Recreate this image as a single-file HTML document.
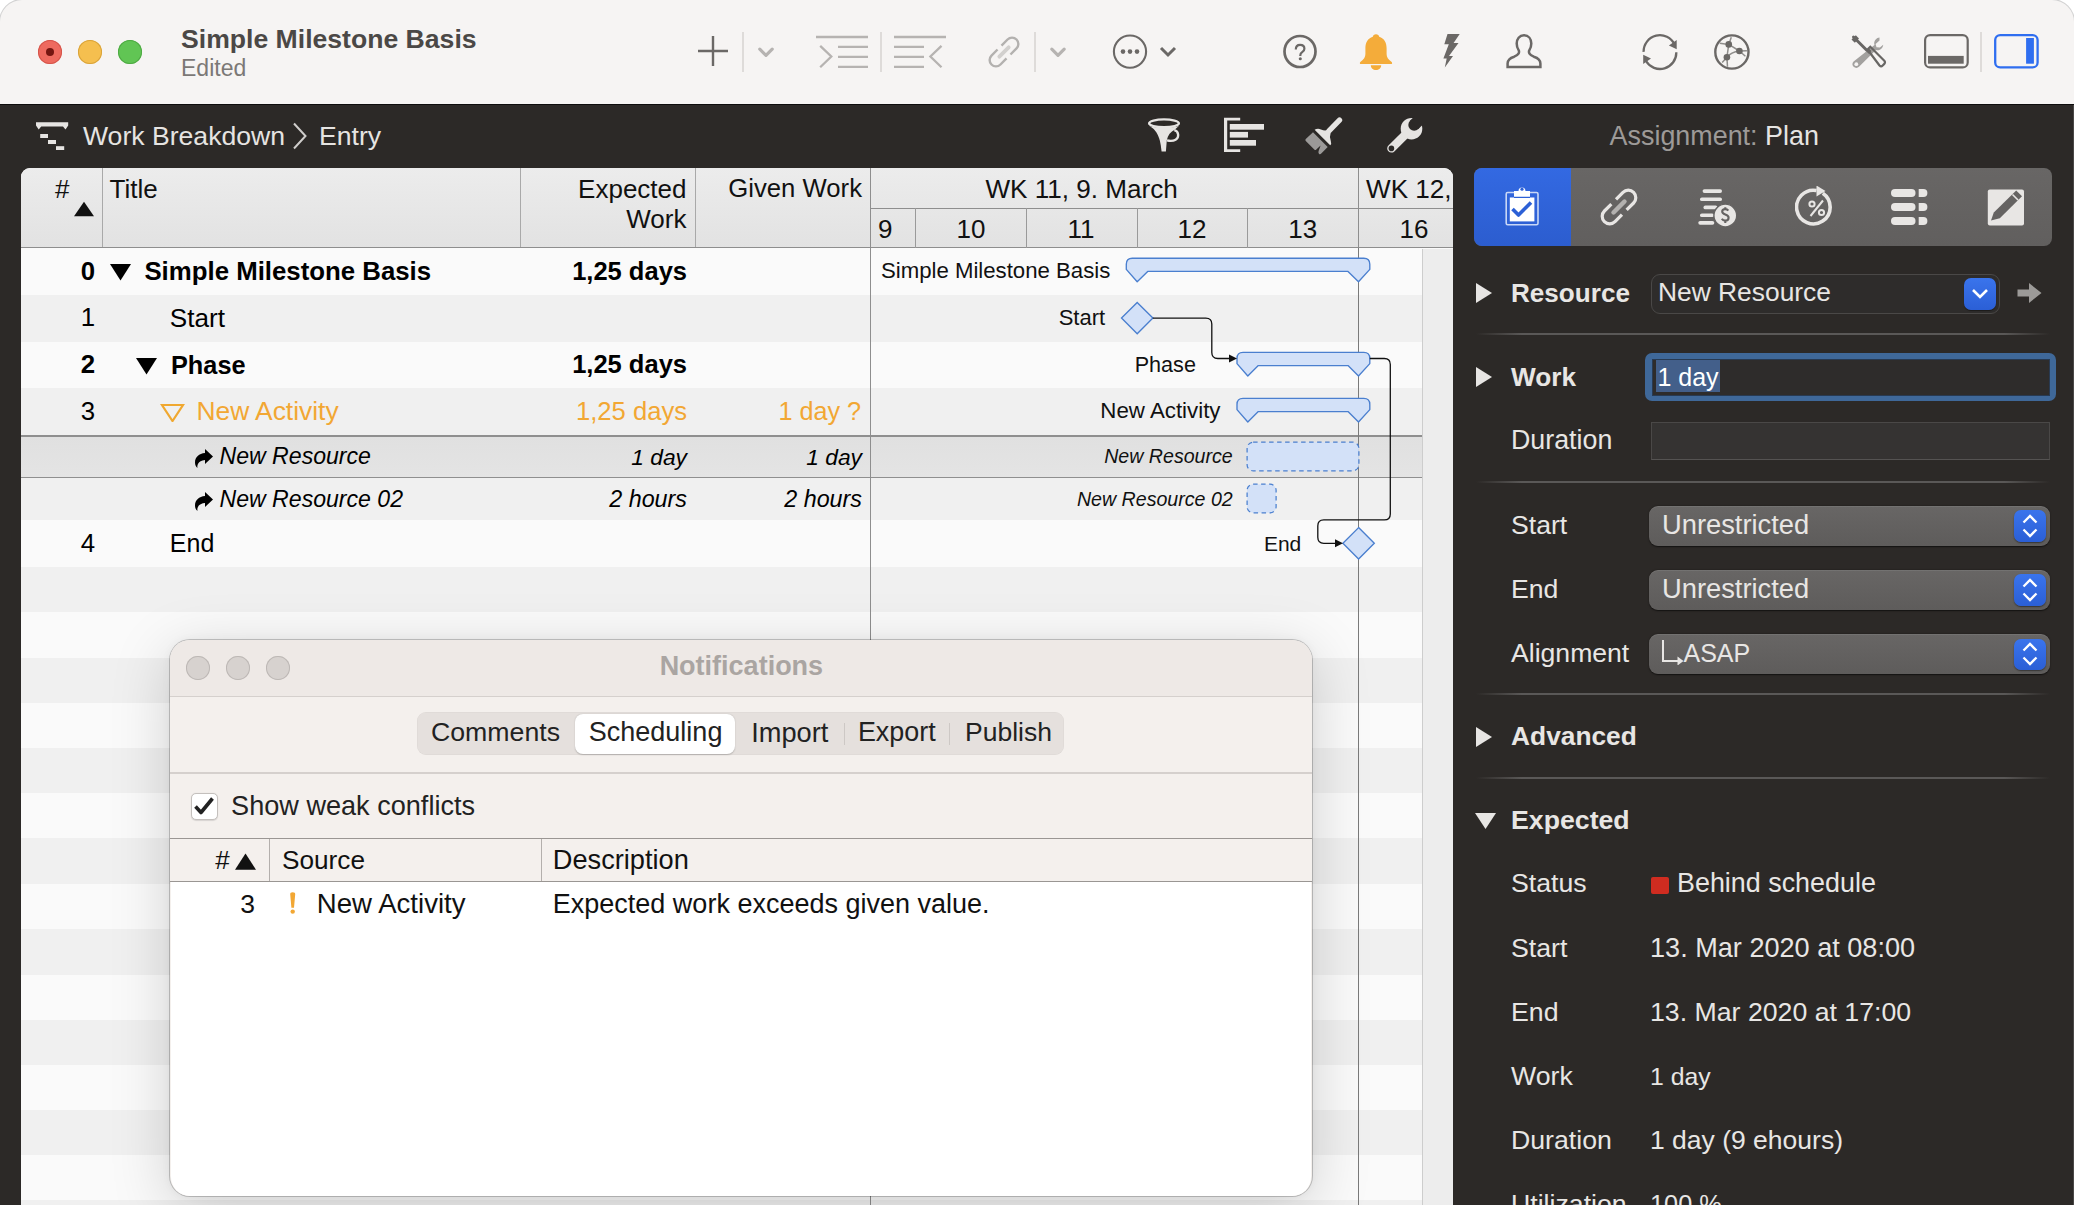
<!DOCTYPE html>
<html><head><meta charset="utf-8"><title>Merlin Project</title>
<style>
*{box-sizing:border-box;margin:0;padding:0}
html,body{width:2074px;height:1205px;overflow:hidden}
body{position:relative;background:#2c2927;font-family:"Liberation Sans",sans-serif}
.t{position:absolute;white-space:nowrap}
.r{position:absolute;display:block}
</style></head><body>
<div class="r" style="left:0;top:0;width:2074px;height:104px;background:#f6f4f3;border-radius:22px 22px 0 0;box-shadow:0 0 0 1px rgba(0,0,0,.18)"></div>
<div class="r" style="left:0px;top:104px;width:2074px;height:1.2px;background:#0e0d0d"></div>
<div class="r" style="left:2072.6px;top:105px;width:1.4px;height:1100px;background:#4a4847"></div>
<div class="r" style="left:38px;top:40px;width:24px;height:24px;border-radius:50%;background:#ee6a5f;box-shadow:inset 0 0 0 1px #d5544a"></div>
<div class="r" style="left:78px;top:40px;width:24px;height:24px;border-radius:50%;background:#f5bf4f;box-shadow:inset 0 0 0 1px #d9a33a"></div>
<div class="r" style="left:118px;top:40px;width:24px;height:24px;border-radius:50%;background:#61c554;box-shadow:inset 0 0 0 1px #4ea943"></div>
<div class="r" style="left:46px;top:48px;width:8px;height:8px;border-radius:50%;background:#741510"></div>
<div class="t" style="top:25.88px;font-size:26.6px;line-height:26.6px;color:#4b4846;font-weight:bold;left:181px;">Simple Milestone Basis</div>
<div class="t" style="top:56.53px;font-size:23px;line-height:23px;color:#7b7876;left:181px;">Edited</div>
<svg class="r" style="left:698px;top:36px;" width="30" height="30" viewBox="0 0 30 30"><path d="M15 0V30M0 15H30" stroke="#6b6866" stroke-width="2.4"/></svg>
<div class="r" style="left:742.25px;top:32px;width:1.5px;height:39.5px;background:#dedbd9"></div>
<div class="r" style="left:880.25px;top:32px;width:1.5px;height:39.5px;background:#dedbd9"></div>
<div class="r" style="left:1034.25px;top:32px;width:1.5px;height:39.5px;background:#dedbd9"></div>
<svg class="r" style="left:757px;top:46px;" width="18" height="13" viewBox="0 0 18 13"><path d="M2.8 3.2L9 9.4L15.2 3.2" fill="none" stroke="#b6b3b1" stroke-width="3.2" stroke-linecap="round" stroke-linejoin="round"/></svg>
<svg class="r" style="left:1049px;top:46px;" width="18" height="13" viewBox="0 0 18 13"><path d="M2.8 3.2L9 9.4L15.2 3.2" fill="none" stroke="#b6b3b1" stroke-width="3.2" stroke-linecap="round" stroke-linejoin="round"/></svg>
<svg class="r" style="left:814px;top:35px;" width="56" height="34" viewBox="0 0 56 34"><g fill="none" stroke="#b6b3b1" stroke-width="2.3"><path d="M2 2H54M24 11.9H54M24 21.9H54M24 31.9H54"/><path d="M6.2 10.8L17.3 21.5L6.2 32.3"/></g></svg>
<svg class="r" style="left:892px;top:35px;" width="56" height="34" viewBox="0 0 56 34"><g fill="none" stroke="#b6b3b1" stroke-width="2.3"><path d="M2 2H54M2 11.9H32M2 21.9H32M2 31.9H32"/><path d="M49.5 10.8L38.4 21.5L49.5 32.3"/></g></svg>
<svg class="r" style="left:988.4px;top:35.8px;" width="32" height="32" viewBox="0 0 32 32"><g transform="rotate(45 16 16)" fill="none" stroke="#b3b1af" stroke-width="2.4"><path d="M9.65 13.2V4.65A6.35 6.35 0 0 1 22.35 4.65V13.2"/><path d="M9.65 18.8V27.35A6.35 6.35 0 0 0 22.35 27.35V18.8"/><path d="M16 9.4V22.6" stroke="#d2d0ce" stroke-width="3.8" stroke-linecap="round"/></g></svg>
<svg class="r" style="left:1112px;top:34px;" width="36" height="36" viewBox="0 0 36 36"><circle cx="18" cy="17.6" r="16.1" fill="none" stroke="#6b6866" stroke-width="2.1"/><circle cx="11" cy="17.6" r="2.3" fill="#6b6866"/><circle cx="18" cy="17.6" r="2.3" fill="#6b6866"/><circle cx="25" cy="17.6" r="2.3" fill="#6b6866"/></svg>
<svg class="r" style="left:1159px;top:45px;" width="18" height="14" viewBox="0 0 18 14"><path d="M2 3L9 10L16 3" fill="none" stroke="#6b6866" stroke-width="3"/></svg>
<svg class="r" style="left:1282px;top:33px;" width="36" height="37" viewBox="0 0 36 37"><circle cx="18" cy="18.5" r="15.5" fill="none" stroke="#6b6866" stroke-width="2.7"/><path d="M13.8 16.4C13.8 13.4 15.6 11.8 18.1 11.8C20.7 11.8 22.4 13.5 22.4 15.7C22.4 17.4 21.5 18.3 20.2 19.2C18.9 20.1 18.3 20.8 18.3 22.4V23" fill="none" stroke="#6b6866" stroke-width="2.2"/><circle cx="18.3" cy="25.8" r="1.55" fill="#6b6866"/></svg>
<svg class="r" style="left:1358px;top:33px;" width="36" height="38" viewBox="0 0 36 38"><path fill="#f4ac3a" d="M18 1.2c1.8 0 3 1.1 3.2 2.6c5 1.6 7.4 5.6 7.4 11.5v5.8c0 3.5 1.6 5.4 4.8 7.6c1.2.9 1 2.4-.5 2.4H3.1c-1.5 0-1.7-1.5-.5-2.4c3.2-2.2 4.8-4.1 4.8-7.6v-5.8c0-5.9 2.4-9.9 7.4-11.5C15 2.3 16.2 1.2 18 1.2zM12.8 32.2h10.4c0 2.8-2.3 4.8-5.2 4.8s-5.2-2-5.2-4.8z"/></svg>
<svg class="r" style="left:1443px;top:33px;" width="19" height="36" viewBox="0 0 19 36"><path fill="#6b6866" d="M4.5 1H16.7L10.6 10H15.5L6 23H10L1.8 34.5L3.7 25.5H0.4L5.8 11.3H1.3Z"/></svg>
<svg class="r" style="left:1505px;top:33px;" width="38" height="37" viewBox="0 0 38 37"><path fill="none" stroke="#6b6866" stroke-width="2.5" d="M19 2.3c-4.6 0-7.3 3.6-7.3 8.3c0 3 .9 5 1.9 6.6c.6 1 .5 2.4-.1 3.5c-.8 1.4-2.2 2.1-4.3 3C5 25 2.6 26.5 2.6 30.5V34H35.4V30.5c0-4-2.4-5.5-6.6-6.8c-2.1-.9-3.5-1.6-4.3-3c-.6-1.1-.7-2.5-.1-3.5c1-1.6 1.9-3.6 1.9-6.6c0-4.7-2.7-8.3-7.3-8.3z"/></svg>
<svg class="r" style="left:1640px;top:33px;" width="40" height="38" viewBox="0 0 40 38"><g fill="none" stroke="#6b6866" stroke-width="2.3"><path d="M3.6 18.9A16.3 16.3 0 0 1 34.6 11.5"/><path d="M36.3 19.2A16.3 16.3 0 0 1 6 28"/></g><path fill="#6b6866" d="M36.7 7V16.2L28.9 12.4Z M3.2 21.8V30.9L11 25.5Z"/></svg>
<svg class="r" style="left:1714px;top:33px;" width="37" height="38" viewBox="0 0 37 38"><g fill="none" stroke="#8f8d8b" stroke-width="1.5"><path d="M14.75 11.4L25.4 18M14.75 11.4L12.9 24.3M12.9 24.3Q17 19 25.4 18M14.75 11.4L17.3 4.2M14.75 11.4L5.7 10.2M25.4 18L32.9 17.7M25.4 18L31.4 23.3M12.9 24.3L8.2 29.6M12.9 24.3L13.5 33.7"/></g><circle cx="17.9" cy="19" r="16.6" fill="none" stroke="#6b6866" stroke-width="2.4"/><g fill="#6b6866"><circle cx="14.75" cy="11.4" r="3.3"/><circle cx="25.4" cy="18" r="3.3"/><circle cx="12.9" cy="24.3" r="3.3"/></g></svg>
<svg class="r" style="left:1850px;top:34px;" width="38" height="37" viewBox="0 0 38 37"><path fill="#a3a19f" d="M29.5 3.5c-3 .3-5.3 2.8-5.3 5.8c0 .6.1 1.1.3 1.6L3.6 27.5c-1.6 1.5-1.6 3.8 0 5.3s3.9 1.5 5.4 0L25.9 16c.6.2 1.2.3 1.8.3c3-.2 5.4-2.6 5.5-5.6l-3.3 2.9l-3.4-.4l-.9-3.2l3.9-3.6z"/><circle cx="6.3" cy="30.2" r="1.9" fill="#f6f4f3"/><path d="M3.5 3L16.5 16" stroke="#686664" stroke-width="3" stroke-linecap="round"/><path d="M1.5 5.5L5.8 1.2L9 4.5L4.8 8.8Z" fill="#686664"/><path d="M17.5 15.5l2.8-2.8l14 14c.9.9.9 2.3 0 3.2l-1.6 1.6c-.9.9-2.3.9-3.2 0z" fill="none" stroke="#686664" stroke-width="2.2"/><path d="M16.2 17.2L19 14.4L21.5 16.9L18.7 19.7Z" fill="#686664"/></svg>
<svg class="r" style="left:1922px;top:32px;" width="48" height="38" viewBox="0 0 48 38"><rect x="3.1" y="3.1" width="42.6" height="32.3" rx="5" fill="none" stroke="#6b6866" stroke-width="2.2"/><rect x="6" y="23.9" width="35.7" height="7.8" fill="#6b6866"/></svg>
<div class="r" style="left:1980.3px;top:32px;width:1.4px;height:39.6px;background:#dedbd9"></div>
<svg class="r" style="left:1993px;top:32px;" width="48" height="38" viewBox="0 0 48 38"><rect x="2.2" y="3.1" width="42.4" height="32.3" rx="5" fill="none" stroke="#2f6ef0" stroke-width="2.3"/><rect x="33.1" y="6" width="7.8" height="25.7" fill="#2f6ef0"/></svg>
<div class="r" style="left:0;top:0;width:2074px;height:30px;background:#fff;z-index:-1"></div>
<svg class="r" style="left:35px;top:121px;" width="35" height="31" viewBox="0 0 35 31"><g fill="#e6e4e2"><path d="M1 1.2H33.2V4.5L30.5 8.5L28 5.5H6.2L3.7 8.5L1 4.5Z"/><rect x="5.2" y="13" width="7.8" height="4"/><rect x="13" y="19" width="8" height="4"/><rect x="21" y="25.2" width="8.2" height="3.8"/></g></svg>
<div class="t" style="top:123.28px;font-size:26.6px;line-height:26.6px;color:#e6e4e2;left:83px;">Work Breakdown</div>
<svg class="r" style="left:291px;top:121px;" width="18" height="30" viewBox="0 0 18 30"><path d="M3 2.5L14.5 15L3 27.5" fill="none" stroke="#cfcdcb" stroke-width="2"/></svg>
<div class="t" style="top:123.28px;font-size:26.6px;line-height:26.6px;color:#e6e4e2;left:319px;">Entry</div>
<svg class="r" style="left:1146px;top:116px;" width="38" height="40" viewBox="0 0 38 40"><ellipse cx="18" cy="7.3" rx="14.9" ry="3.9" fill="none" stroke="#e6e4e2" stroke-width="2.3"/><path fill="#e6e4e2" d="M3.2 9.8C9 13.5 14.2 18 15.6 35.6H19.9L20.8 24.2C21.8 19.5 24.5 15.8 29 13.6L33 9.8C27 12.5 9 12.5 3.2 9.8Z"/><path d="M28.3 14.2C32.8 15.2 33.6 21.5 29.6 23.7C27.4 25 24.2 25.2 21 24.4" fill="none" stroke="#e6e4e2" stroke-width="2.3"/></svg>
<svg class="r" style="left:1222px;top:116px;" width="44" height="38" viewBox="0 0 44 38"><g fill="#e6e4e2"><path d="M2 1.7H18.2V4.5H5.2V33.2H18.2V36H2Z"/><rect x="7.8" y="8" width="34.2" height="5.7"/><rect x="7.8" y="15.9" width="18.2" height="5.7"/><rect x="7.8" y="24" width="26.2" height="5.7"/></g></svg>
<svg class="r" style="left:1303px;top:116px;" width="42" height="42" viewBox="0 0 42 42"><path d="M36.5 4.2L26 14.8" stroke="#e6e4e2" stroke-width="5.4" stroke-linecap="round"/><path fill="#e6e4e2" d="M11.6 13.8Q14.5 12 18 13.4Q21.5 15 24.3 14L27.6 17.3Q26.2 20.8 27.8 25Q28.8 28 27.2 29.3Z"/><path fill="#9b9998" d="M10 16.2L24.7 31L18 37.8Q17 38.8 15.9 37.7Q15 36.5 15.7 34.8L17.6 29.5L13.3 33.6Q12.3 34.6 11.3 33.6L2.8 25Q1.8 24 2.8 23Z"/></svg>
<svg class="r" style="left:1384px;top:116px;" width="42" height="40" viewBox="0 0 42 40"><circle cx="27.5" cy="12.7" r="10.8" fill="#e6e4e2"/><path d="M7.4 32.4L25 15" stroke="#e6e4e2" stroke-width="8.4" stroke-linecap="round"/><circle cx="30.2" cy="8.9" r="5.9" fill="#2c2927"/><path d="M30.2 8.9L42 -2.9" stroke="#2c2927" stroke-width="11.8"/><circle cx="7.4" cy="32.4" r="2.8" fill="#2c2927"/></svg>
<div class="t" style="top:123.23px;font-size:26.9px;line-height:26.9px;color:#e6e4e2;left:1609.6px;"><span style="color:#9d9a98">Assignment: </span>Plan</div>
<div class="r" style="left:21px;top:168px;width:1432px;height:1100px;background:#fafafa;border-radius:9px 9px 0 0;overflow:hidden">
</div>
<div class="r" style="left:21px;top:248px;width:1402px;height:47px;background:#fafafa"></div>
<div class="r" style="left:21px;top:295px;width:1402px;height:47px;background:#f0f0f0"></div>
<div class="r" style="left:21px;top:342px;width:1402px;height:46px;background:#fafafa"></div>
<div class="r" style="left:21px;top:388px;width:1402px;height:47.5px;background:#f0f0f0"></div>
<div class="r" style="left:21px;top:435.5px;width:1402px;height:41.5px;background:linear-gradient(#e0e0e0,#e4e4e4)"></div>
<div class="r" style="left:21px;top:477px;width:1402px;height:43px;background:#f0f0f0"></div>
<div class="r" style="left:21px;top:520px;width:1402px;height:46.5px;background:#fafafa"></div>
<div class="r" style="left:21px;top:566.5px;width:1402px;height:45.5px;background:#f0f0f0"></div>
<div class="r" style="left:21px;top:612px;width:1402px;height:46px;background:#fafafa"></div>
<div class="r" style="left:21px;top:658px;width:1402px;height:45px;background:#f0f0f0"></div>
<div class="r" style="left:21px;top:703px;width:1402px;height:45px;background:#fafafa"></div>
<div class="r" style="left:21px;top:748px;width:1402px;height:45px;background:#f0f0f0"></div>
<div class="r" style="left:21px;top:793px;width:1402px;height:45px;background:#fafafa"></div>
<div class="r" style="left:21px;top:838px;width:1402px;height:46px;background:#f0f0f0"></div>
<div class="r" style="left:21px;top:884px;width:1402px;height:45px;background:#fafafa"></div>
<div class="r" style="left:21px;top:929px;width:1402px;height:46px;background:#f0f0f0"></div>
<div class="r" style="left:21px;top:975px;width:1402px;height:45px;background:#fafafa"></div>
<div class="r" style="left:21px;top:1020px;width:1402px;height:45px;background:#f0f0f0"></div>
<div class="r" style="left:21px;top:1065px;width:1402px;height:45px;background:#fafafa"></div>
<div class="r" style="left:21px;top:1110px;width:1402px;height:45px;background:#f0f0f0"></div>
<div class="r" style="left:21px;top:1155px;width:1402px;height:45px;background:#fafafa"></div>
<div class="r" style="left:21px;top:1200px;width:1402px;height:5px;background:#f0f0f0"></div>
<div class="r" style="left:21px;top:435px;width:1402px;height:1.5px;background:#8f8f8f"></div>
<div class="r" style="left:21px;top:476.5px;width:1402px;height:1.5px;background:#8f8f8f"></div>
<div class="r" style="left:21px;top:168px;width:1432px;height:80px;background:linear-gradient(#ececec,#e2e2e2);border-radius:9px 9px 0 0"></div>
<div class="r" style="left:21px;top:247.2px;width:1432px;height:1.2px;background:#8e8e8e"></div>
<div class="r" style="left:101.5px;top:168px;width:1px;height:79px;background:#a9a9a9"></div>
<div class="r" style="left:520.1px;top:168px;width:1px;height:79px;background:#a9a9a9"></div>
<div class="r" style="left:695.3px;top:168px;width:1px;height:79px;background:#a9a9a9"></div>
<div class="r" style="left:1423px;top:248.5px;width:30px;height:960px;background:#ededed"></div>
<div class="r" style="left:1422.3px;top:248.5px;width:1.2px;height:960px;background:#cdcdcd"></div>
<div class="t" style="top:175.99px;font-size:26px;line-height:26px;color:#111;left:55px;">#</div>
<svg class="r" style="left:73px;top:201px;" width="22" height="16" viewBox="0 0 22 16"><path d="M11 0.8L21 15.2H1Z" fill="#111"/></svg>
<div class="t" style="top:175.99px;font-size:26px;line-height:26px;color:#111;left:109.5px;">Title</div>
<div class="t" style="top:175.99px;font-size:26px;line-height:26px;color:#111;right:1387.5px;text-align:right;">Expected</div>
<div class="t" style="top:205.99px;font-size:26px;line-height:26px;color:#111;right:1387.5px;text-align:right;">Work</div>
<div class="t" style="top:176.24px;font-size:25.7px;line-height:25.7px;color:#111;right:1212px;text-align:right;">Given Work</div>
<div class="t" style="top:259.16px;font-size:25.8px;line-height:25.8px;color:#000;font-weight:bold;left:-512px;width:1200px;text-align:center;">0</div>
<div class="t" style="top:305.16px;font-size:25.8px;line-height:25.8px;color:#000;left:-512px;width:1200px;text-align:center;">1</div>
<div class="t" style="top:352.16px;font-size:25.8px;line-height:25.8px;color:#000;font-weight:bold;left:-512px;width:1200px;text-align:center;">2</div>
<div class="t" style="top:398.66px;font-size:25.8px;line-height:25.8px;color:#000;left:-512px;width:1200px;text-align:center;">3</div>
<div class="t" style="top:530.66px;font-size:25.8px;line-height:25.8px;color:#000;left:-512px;width:1200px;text-align:center;">4</div>
<svg class="r" style="left:109px;top:263px;" width="23" height="18" viewBox="0 0 23 18"><path d="M1 1H22L11.5 17.5Z" fill="#000"/></svg>
<svg class="r" style="left:135px;top:357px;" width="23" height="18" viewBox="0 0 23 18"><path d="M1 1H22L11.5 17.5Z" fill="#000"/></svg>
<svg class="r" style="left:160px;top:403px;" width="25" height="19" viewBox="0 0 25 19"><path d="M2 2H23L12.5 18Z" fill="none" stroke="#f0a830" stroke-width="2.2" stroke-linejoin="miter"/></svg>
<div class="t" style="top:259.16px;font-size:25.8px;line-height:25.8px;color:#000;font-weight:bold;left:144.4px;">Simple Milestone Basis</div>
<div class="t" style="top:259.41px;font-size:25.5px;line-height:25.5px;color:#000;font-weight:bold;right:1387px;text-align:right;">1,25 days</div>
<div class="t" style="top:304.91px;font-size:26.1px;line-height:26.1px;color:#000;left:169.8px;">Start</div>
<div class="t" style="top:352.58px;font-size:25.3px;line-height:25.3px;color:#000;font-weight:bold;left:171px;">Phase</div>
<div class="t" style="top:352.41px;font-size:25.5px;line-height:25.5px;color:#000;font-weight:bold;right:1387px;text-align:right;">1,25 days</div>
<div class="t" style="top:398.15px;font-size:26.4px;line-height:26.4px;color:#f2a733;left:196.4px;">New Activity</div>
<div class="t" style="top:398.83px;font-size:25.6px;line-height:25.6px;color:#f2a733;right:1387px;text-align:right;">1,25 days</div>
<div class="t" style="top:399.17px;font-size:25.2px;line-height:25.2px;color:#f2a733;right:1213px;text-align:right;">1 day ?</div>
<svg class="r" style="left:194px;top:448px;" width="20" height="22" viewBox="0 0 20 22"><path fill="#000" d="M19 8.5L11 1V5C5 5.5 1 9 1 14.5C1 17 2 19 3.5 20C3 18 3.5 12.5 11 12V16Z"/></svg>
<svg class="r" style="left:194px;top:491px;" width="20" height="22" viewBox="0 0 20 22"><path fill="#000" d="M19 8.5L11 1V5C5 5.5 1 9 1 14.5C1 17 2 19 3.5 20C3 18 3.5 12.5 11 12V16Z"/></svg>
<div class="t" style="top:445.45px;font-size:23.1px;line-height:23.1px;color:#000;font-style:italic;left:219.5px;">New Resource</div>
<div class="t" style="top:445.7px;font-size:22.8px;line-height:22.8px;color:#000;font-style:italic;right:1387px;text-align:right;">1 day</div>
<div class="t" style="top:445.7px;font-size:22.8px;line-height:22.8px;color:#000;font-style:italic;right:1212px;text-align:right;">1 day</div>
<div class="t" style="top:488.45px;font-size:23.1px;line-height:23.1px;color:#000;font-style:italic;left:219.5px;">New Resource 02</div>
<div class="t" style="top:488.28px;font-size:23.3px;line-height:23.3px;color:#000;font-style:italic;right:1387px;text-align:right;">2 hours</div>
<div class="t" style="top:488.28px;font-size:23.3px;line-height:23.3px;color:#000;font-style:italic;right:1212px;text-align:right;">2 hours</div>
<div class="t" style="top:531.34px;font-size:25px;line-height:25px;color:#000;left:169.8px;">End</div>
<div class="r" style="left:869.8px;top:168px;width:1.3px;height:1040px;background:#8e8e8e"></div>
<div class="r" style="left:870px;top:208px;width:583px;height:1.3px;background:#8e8e8e"></div>
<div class="r" style="left:914.8px;top:208px;width:1.2px;height:40px;background:#9a9a9a"></div>
<div class="r" style="left:1025.9px;top:208px;width:1.2px;height:40px;background:#9a9a9a"></div>
<div class="r" style="left:1136.8px;top:208px;width:1.2px;height:40px;background:#9a9a9a"></div>
<div class="r" style="left:1246.8px;top:208px;width:1.2px;height:40px;background:#9a9a9a"></div>
<div class="r" style="left:1357.9px;top:168px;width:1.3px;height:80px;background:#8e8e8e"></div>
<div class="t" style="top:176.01px;font-size:26.1px;line-height:26.1px;color:#111;left:481.6px;width:1200px;text-align:center;">WK 11, 9. March</div>
<div class="t" style="top:176.01px;font-size:26.1px;line-height:26.1px;color:#111;left:1366px;">WK 12,</div>
<div class="t" style="top:216.19px;font-size:26px;line-height:26px;color:#111;left:878px;">9</div>
<div class="t" style="top:216.19px;font-size:26px;line-height:26px;color:#111;left:371px;width:1200px;text-align:center;">10</div>
<div class="t" style="top:216.19px;font-size:26px;line-height:26px;color:#111;left:481px;width:1200px;text-align:center;">11</div>
<div class="t" style="top:216.19px;font-size:26px;line-height:26px;color:#111;left:592px;width:1200px;text-align:center;">12</div>
<div class="t" style="top:216.19px;font-size:26px;line-height:26px;color:#111;left:702.7px;width:1200px;text-align:center;">13</div>
<div class="t" style="top:216.19px;font-size:26px;line-height:26px;color:#111;left:814px;width:1200px;text-align:center;">16</div>
<div class="r" style="left:1357.9px;top:248px;width:1.3px;height:960px;background:#7a7a7a"></div>
<svg class="r" style="left:0px;top:0px;pointer-events:none" width="2074" height="1205" viewBox="0 0 2074 1205"><path d="M1132.3 258.2H1363.8Q1369.8 258.2 1369.8 264.2V269.4L1358.5 281.8L1348.0 271.4H1147.7L1137.2 281.8L1126.3 269.4V264.2Q1126.3 258.2 1132.3 258.2Z" fill="#d3e1f8" stroke="#4a7fcf" stroke-width="1.35" stroke-linejoin="round"/><path d="M1243 352.4H1363.8Q1369.8 352.4 1369.8 358.4V363.59999999999997L1358.5 376.0L1348.0 365.59999999999997H1258.3L1247.8 376.0L1237 363.59999999999997V358.4Q1237 352.4 1243 352.4Z" fill="#d3e1f8" stroke="#4a7fcf" stroke-width="1.35" stroke-linejoin="round"/><path d="M1243 398.4H1363.8Q1369.8 398.4 1369.8 404.4V409.59999999999997L1358.5 422.0L1348.0 411.59999999999997H1258.3L1247.8 422.0L1237 409.59999999999997V404.4Q1237 398.4 1243 398.4Z" fill="#d3e1f8" stroke="#4a7fcf" stroke-width="1.35" stroke-linejoin="round"/><path d="M1137.2 302.40000000000003L1152.9 318.1L1137.2 333.8L1121.5 318.1Z" fill="#d3e1f8" stroke="#4a7fcf" stroke-width="1.35"/><path d="M1358.6 527.5999999999999L1374.3 543.3L1358.6 559.0L1342.8999999999999 543.3Z" fill="#d3e1f8" stroke="#4a7fcf" stroke-width="1.35"/><rect x="1247.1" y="442.2" width="111.8" height="28.6" rx="6" fill="#d3e1f8" stroke="#4a7fcf" stroke-width="1.25" stroke-dasharray="4.5 3.5"/><rect x="1247.1" y="484.2" width="29" height="28.6" rx="6" fill="#d3e1f8" stroke="#4a7fcf" stroke-width="1.25" stroke-dasharray="4.5 3.5"/><path d="M1152.8 318.1H1205.8Q1211.8 318.1 1211.8 324.1V352.5Q1211.8 358.5 1217.8 358.5H1230" fill="none" stroke="#111" stroke-width="1.3"/><path d="M1229 354.5L1237 358.5L1229 362.5Z" fill="#111"/><path d="M1369.8 358.5H1384.3Q1390.3 358.5 1390.3 364.5V513.9Q1390.3 519.9 1384.3 519.9H1323.8Q1317.8 519.9 1317.8 525.9V537.3Q1317.8 543.3 1323.8 543.3H1336" fill="none" stroke="#111" stroke-width="1.3"/><path d="M1335 539.3L1343 543.3L1335 547.3Z" fill="#111"/></svg>
<div class="t" style="top:259.81px;font-size:22.2px;line-height:22.2px;color:#111;right:963.7px;text-align:right;">Simple Milestone Basis</div>
<div class="t" style="top:306.88px;font-size:22px;line-height:22px;color:#111;right:968.9px;text-align:right;">Start</div>
<div class="t" style="top:354.42px;font-size:21.6px;line-height:21.6px;color:#111;right:878.1px;text-align:right;">Phase</div>
<div class="t" style="top:399.52px;font-size:22.3px;line-height:22.3px;color:#111;right:853.5px;text-align:right;">New Activity</div>
<div class="t" style="top:446.91px;font-size:19.6px;line-height:19.6px;color:#111;font-style:italic;right:841.3px;text-align:right;">New Resource</div>
<div class="t" style="top:489.81px;font-size:19.6px;line-height:19.6px;color:#111;font-style:italic;right:841.3px;text-align:right;">New Resource 02</div>
<div class="t" style="top:532.82px;font-size:21px;line-height:21px;color:#111;right:772.7px;text-align:right;">End</div>
<div class="r" style="left:1474px;top:168.2px;width:578px;height:77.5px;background:linear-gradient(#686665,#615f5e);border-radius:8px"></div>
<div class="r" style="left:1474px;top:168.2px;width:97px;height:77.5px;background:linear-gradient(#3369e2,#2c5dcf);border-radius:8px 0 0 8px"></div>
<svg class="r" style="left:1504px;top:184px;" width="36" height="43" viewBox="0 0 36 43"><rect x="2.2" y="8.5" width="31.8" height="32.2" rx="1.5" fill="none" stroke="#c9d7f6" stroke-width="1.6"/><rect x="5.8" y="13.5" width="24.6" height="23.9" fill="#fff"/><path d="M10 12.8V7H14.5A3.5 3.5 0 0 1 21.5 7H26V12.8Z" fill="#fff"/><circle cx="18" cy="5.2" r="1.6" fill="#2c60d6"/><path d="M8.5 25L14.5 31L27 18.5" fill="none" stroke="#2c60d6" stroke-width="3.6" stroke-linejoin="round"/><path d="M10 13.5H26" stroke="#2c60d6" stroke-width="1"/></svg>
<svg class="r" style="left:1598.9px;top:187px;" width="40" height="40" viewBox="0 0 40 40"><g transform="rotate(45 20 20)" fill="none" stroke="#e8e6e4" stroke-width="3.2"><path d="M12.5 16.7V6.85A7.5 7.5 0 0 1 27.5 6.85V16.7"/><path d="M12.5 23.3V33.15A7.5 7.5 0 0 0 27.5 33.15V23.3"/><path d="M20 12.25V27.75" stroke="#b3b1af" stroke-width="4.5" stroke-linecap="round"/></g></svg>
<svg class="r" style="left:1698px;top:189px;" width="40" height="40" viewBox="0 0 40 40"><rect x="4.6" y="0.2" width="19.4" height="3.7" rx="1.85" fill="#e8e6e4"/><rect x="2" y="8.4" width="22" height="3.7" rx="1.85" fill="#e8e6e4"/><rect x="5.5" y="16.6" width="14" height="3.7" rx="1.85" fill="#e8e6e4"/><rect x="2" y="24.4" width="14" height="3.7" rx="1.85" fill="#e8e6e4"/><rect x="0.3" y="32" width="16" height="3.7" rx="1.85" fill="#e8e6e4"/><circle cx="27.3" cy="26.5" r="11.4" fill="#e8e6e4" stroke="#656362" stroke-width="1.4"/><path d="M30.3 21.6C29.6 20.6 28.6 20.1 27.3 20.1C25.4 20.1 24.2 21.1 24.2 22.6C24.2 24.3 25.6 24.9 27.3 25.5C29.1 26.1 30.6 26.8 30.6 28.7C30.6 30.4 29.2 31.6 27.2 31.6C25.7 31.6 24.5 31 23.8 29.8M27.3 18.2V20.1M27.3 31.6V34" fill="none" stroke="#656362" stroke-width="2.1"/></svg>
<svg class="r" style="left:1795px;top:186px;" width="44" height="44" viewBox="0 0 44 44"><path d="M27.8 7.2A16.8 16.8 0 1 1 21.5 4.6" fill="none" stroke="#e8e6e4" stroke-width="3.6"/><path d="M21.5 -0.5L30.5 5L21.5 10.5Z" fill="#e8e6e4"/><circle cx="17" cy="18" r="2.6" fill="none" stroke="#e8e6e4" stroke-width="2"/><circle cx="26.5" cy="26.5" r="2.6" fill="none" stroke="#e8e6e4" stroke-width="2"/><path d="M28 14.5L15.5 30" stroke="#e8e6e4" stroke-width="2"/></svg>
<svg class="r" style="left:1891px;top:189px;" width="37" height="37" viewBox="0 0 37 37"><rect x="0" y="0" width="24.5" height="8" rx="4" fill="#e8e6e4"/><path d="M27.7 0H32.4a4 4 0 0 1 0 8H27.7Z" fill="#e8e6e4"/><rect x="0" y="14" width="24.5" height="8" rx="4" fill="#e8e6e4"/><path d="M27.7 14H32.4a4 4 0 0 1 0 8H27.7Z" fill="#e8e6e4"/><rect x="0" y="28.1" width="24.5" height="8" rx="4" fill="#e8e6e4"/><path d="M27.7 28.1H32.4a4 4 0 0 1 0 8H27.7Z" fill="#e8e6e4"/></svg>
<svg class="r" style="left:1987px;top:188.5px;" width="38" height="38" viewBox="0 0 38 38"><rect x="0.8" y="0.5" width="36.2" height="36" rx="2" fill="#e8e6e4"/><path d="M4 31.5L6.8 23.5L29.2 1.5L35 7.3L12.8 29.3Z" fill="#656362"/><path d="M25.5 5.5L31 11" stroke="#e8e6e4" stroke-width="1.6"/></svg>
<svg class="r" style="left:1475px;top:281.5px;" width="18" height="22" viewBox="0 0 18 22"><path d="M1 1L17 11L1 21Z" fill="#e8e6e4"/></svg>
<div class="t" style="top:279.51px;font-size:26.1px;line-height:26.1px;color:#e8e6e4;font-weight:bold;left:1511px;">Resource</div>
<div class="r" style="left:1650.9px;top:274.4px;width:349px;height:39.6px;background:#2e2c2b;border:1.5px solid #4a4847;border-radius:9px"></div>
<div class="t" style="top:279.25px;font-size:26.4px;line-height:26.4px;color:#e8e6e4;left:1657.9px;">New Resource</div>
<div class="r" style="left:1964px;top:278px;width:32px;height:31.7px;background:linear-gradient(#3a74ec,#2b5fd6);border-radius:7px;box-shadow:0 1px 1px rgba(0,0,0,.4)"></div>
<svg class="r" style="left:1970px;top:287px;" width="20" height="14" viewBox="0 0 20 14"><path d="M3 3L10 10L17 3" fill="none" stroke="#fff" stroke-width="2.6"/></svg>
<svg class="r" style="left:2016px;top:281px;" width="28" height="24" viewBox="0 0 28 24"><path d="M1.5 8.5H13V2L25.5 12L13 22V15.5H1.5Z" fill="#9c9a98"/></svg>
<div class="r" style="left:1476px;top:333px;width:574px;height:2px;background:linear-gradient(90deg,rgba(90,88,87,0),#5a5857 8%,#5a5857 92%,rgba(90,88,87,0))"></div>
<svg class="r" style="left:1475px;top:365.5px;" width="18" height="22" viewBox="0 0 18 22"><path d="M1 1L17 11L1 21Z" fill="#e8e6e4"/></svg>
<div class="t" style="top:363.62px;font-size:26.2px;line-height:26.2px;color:#e8e6e4;font-weight:bold;left:1511px;">Work</div>
<div class="r" style="left:1645.1px;top:352.6px;width:410.6px;height:48.5px;background:#3f6899;border-radius:7px"></div>
<div class="r" style="left:1651.5px;top:358.6px;width:398.5px;height:37px;background:#2e2c2b;border:1px solid #283a52"></div>
<div class="r" style="left:1656px;top:360.3px;width:64px;height:31.5px;background:#435f8a"></div>
<div class="t" style="top:365.04px;font-size:25px;line-height:25px;color:#fff;left:1657.4px;">1 day</div>
<div class="t" style="top:426.91px;font-size:26.8px;line-height:26.8px;color:#e8e6e4;left:1511px;">Duration</div>
<div class="r" style="left:1651px;top:422.4px;width:399px;height:37.4px;background:#353332;border:1px solid #4a4847;border-bottom-color:#555352"></div>
<div class="r" style="left:1476px;top:481.3px;width:574px;height:2px;background:linear-gradient(90deg,rgba(90,88,87,0),#5a5857 8%,#5a5857 92%,rgba(90,88,87,0))"></div>
<div class="t" style="top:511.88px;font-size:26.6px;line-height:26.6px;color:#e8e6e4;left:1511px;">Start</div>
<div class="r" style="left:1648.8px;top:506.1px;width:401px;height:40px;background:linear-gradient(#686665,#5e5c5b);border-radius:9px;box-shadow:0 0.5px 1.5px rgba(0,0,0,.6), inset 0 1px 0 rgba(255,255,255,.08)"></div>
<div class="r" style="left:2014.1px;top:510.3px;width:32px;height:31.6px;background:linear-gradient(#3a74ec,#2b5fd6);border-radius:7px;box-shadow:0 1px 1.5px rgba(0,0,0,.45)"></div>
<svg class="r" style="left:2021px;top:514.1px;" width="18" height="24" viewBox="0 0 18 24"><path d="M2.5 8.5L9 2L15.5 8.5M2.5 15.5L9 22L15.5 15.5" fill="none" stroke="#fff" stroke-width="2.3"/></svg>
<div class="t" style="top:511.29px;font-size:27.3px;line-height:27.3px;color:#e8e6e4;left:1662px;">Unrestricted</div>
<div class="t" style="top:511.88px;font-size:26.6px;line-height:26.6px;color:#e8e6e4;left:1511px;"></div>
<div class="t" style="top:575.88px;font-size:26.6px;line-height:26.6px;color:#e8e6e4;left:1511px;">End</div>
<div class="r" style="left:1648.8px;top:570.1px;width:401px;height:40px;background:linear-gradient(#686665,#5e5c5b);border-radius:9px;box-shadow:0 0.5px 1.5px rgba(0,0,0,.6), inset 0 1px 0 rgba(255,255,255,.08)"></div>
<div class="r" style="left:2014.1px;top:574.3px;width:32px;height:31.6px;background:linear-gradient(#3a74ec,#2b5fd6);border-radius:7px;box-shadow:0 1px 1.5px rgba(0,0,0,.45)"></div>
<svg class="r" style="left:2021px;top:578.1px;" width="18" height="24" viewBox="0 0 18 24"><path d="M2.5 8.5L9 2L15.5 8.5M2.5 15.5L9 22L15.5 15.5" fill="none" stroke="#fff" stroke-width="2.3"/></svg>
<div class="t" style="top:575.29px;font-size:27.3px;line-height:27.3px;color:#e8e6e4;left:1662px;">Unrestricted</div>
<div class="t" style="top:640.08px;font-size:26.6px;line-height:26.6px;color:#e8e6e4;left:1511px;">Alignment</div>
<div class="r" style="left:1648.8px;top:634.4px;width:401px;height:40px;background:linear-gradient(#686665,#5e5c5b);border-radius:9px;box-shadow:0 0.5px 1.5px rgba(0,0,0,.6), inset 0 1px 0 rgba(255,255,255,.08)"></div>
<div class="r" style="left:2014.1px;top:638.6px;width:32px;height:31.6px;background:linear-gradient(#3a74ec,#2b5fd6);border-radius:7px;box-shadow:0 1px 1.5px rgba(0,0,0,.45)"></div>
<svg class="r" style="left:2021px;top:642.4px;" width="18" height="24" viewBox="0 0 18 24"><path d="M2.5 8.5L9 2L15.5 8.5M2.5 15.5L9 22L15.5 15.5" fill="none" stroke="#fff" stroke-width="2.3"/></svg>
<svg class="r" style="left:1661px;top:639px;" width="24" height="26" viewBox="0 0 24 26"><path d="M2 1V22H19" fill="none" stroke="#e8e6e4" stroke-width="2"/><path d="M16.5 17.5L22.5 22L16.5 26.5Z" fill="#e8e6e4"/></svg>
<div class="t" style="top:641.44px;font-size:25px;line-height:25px;color:#e8e6e4;left:1683.5px;">ASAP</div>
<div class="r" style="left:1476px;top:692.6px;width:574px;height:2px;background:linear-gradient(90deg,rgba(90,88,87,0),#5a5857 8%,#5a5857 92%,rgba(90,88,87,0))"></div>
<svg class="r" style="left:1475px;top:726px;" width="18" height="22" viewBox="0 0 18 22"><path d="M1 1L17 11L1 21Z" fill="#e8e6e4"/></svg>
<div class="t" style="top:723.04px;font-size:26.3px;line-height:26.3px;color:#e8e6e4;font-weight:bold;left:1511.1px;">Advanced</div>
<div class="r" style="left:1476px;top:776.6px;width:574px;height:2px;background:linear-gradient(90deg,rgba(90,88,87,0),#5a5857 8%,#5a5857 92%,rgba(90,88,87,0))"></div>
<svg class="r" style="left:1474px;top:811.5px;" width="23" height="18" viewBox="0 0 23 18"><path d="M1 1H22L11.5 17Z" fill="#e8e6e4"/></svg>
<div class="t" style="top:807.1px;font-size:26.7px;line-height:26.7px;color:#e8e6e4;font-weight:bold;left:1511px;">Expected</div>
<div class="t" style="top:870.4px;font-size:26.7px;line-height:26.7px;color:#e8e6e4;left:1511px;">Status</div>
<div class="t" style="top:934.8px;font-size:26.7px;line-height:26.7px;color:#e8e6e4;left:1511px;">Start</div>
<div class="t" style="top:934.46px;font-size:27.1px;line-height:27.1px;color:#e8e6e4;left:1650px;">13. Mar 2020 at 08:00</div>
<div class="t" style="top:998.7px;font-size:26.7px;line-height:26.7px;color:#e8e6e4;left:1511px;">End</div>
<div class="t" style="top:998.7px;font-size:26.7px;line-height:26.7px;color:#e8e6e4;left:1650px;">13. Mar 2020 at 17:00</div>
<div class="t" style="top:1063.3px;font-size:26.7px;line-height:26.7px;color:#e8e6e4;left:1511px;">Work</div>
<div class="t" style="top:1064.91px;font-size:24.8px;line-height:24.8px;color:#e8e6e4;left:1650px;">1 day</div>
<div class="t" style="top:1126.9px;font-size:26.7px;line-height:26.7px;color:#e8e6e4;left:1511px;">Duration</div>
<div class="t" style="top:1127.07px;font-size:26.5px;line-height:26.5px;color:#e8e6e4;left:1650px;">1 day (9 ehours)</div>
<div class="t" style="top:1190.9px;font-size:26.7px;line-height:26.7px;color:#e8e6e4;left:1511px;">Utilization</div>
<div class="t" style="top:1192.08px;font-size:25.3px;line-height:25.3px;color:#e8e6e4;left:1650px;">100 %</div>
<div class="r" style="left:1651px;top:876.5px;width:17.5px;height:17px;background:#d02c20;border-radius:2px"></div>
<div class="t" style="top:870.23px;font-size:26.9px;line-height:26.9px;color:#e8e6e4;left:1677px;">Behind schedule</div>
<div class="r" style="left:169.8px;top:639.5px;width:1142.4px;height:556.5px;background:#f4f0ed;border-radius:20px;box-shadow:0 0 0 1px rgba(0,0,0,.2),0 12px 60px rgba(0,0,0,.17),0 0 10px rgba(0,0,0,.05)"></div>
<div class="r" style="left:169.8px;top:639.5px;width:1142.4px;height:57px;background:#eee9e6;border-radius:20px 20px 0 0"></div>
<div class="r" style="left:169.8px;top:696px;width:1142.4px;height:1.3px;background:#d5d0cd"></div>
<div class="r" style="left:186.1px;top:656px;width:23.8px;height:23.8px;border-radius:50%;background:#d7d2cf;box-shadow:inset 0 0 0 1px #bdb8b5"></div>
<div class="r" style="left:226px;top:656px;width:23.8px;height:23.8px;border-radius:50%;background:#d7d2cf;box-shadow:inset 0 0 0 1px #bdb8b5"></div>
<div class="r" style="left:266.1px;top:656px;width:23.8px;height:23.8px;border-radius:50%;background:#d7d2cf;box-shadow:inset 0 0 0 1px #bdb8b5"></div>
<div class="t" style="top:652.74px;font-size:27px;line-height:27px;color:#aaa5a2;font-weight:bold;left:141.4px;width:1200px;text-align:center;">Notifications</div>
<div class="r" style="left:417.4px;top:712.2px;width:647.1px;height:43.1px;background:#e5e0dd;border-radius:9px;box-shadow:inset 0 0 0 0.5px rgba(0,0,0,.04)"></div>
<div class="r" style="left:575px;top:714.2px;width:159.8px;height:39.9px;background:#fff;border-radius:8px;box-shadow:0 0.5px 1.5px rgba(0,0,0,.22)"></div>
<div class="t" style="top:719px;font-size:26.7px;line-height:26.7px;color:#222;left:431px;">Comments</div>
<div class="t" style="top:718.74px;font-size:27px;line-height:27px;color:#222;left:588.8px;">Scheduling</div>
<div class="t" style="top:718.58px;font-size:27.2px;line-height:27.2px;color:#222;left:751.3px;">Import</div>
<div class="t" style="top:718.83px;font-size:26.9px;line-height:26.9px;color:#222;left:857.9px;">Export</div>
<div class="t" style="top:719.17px;font-size:26.5px;line-height:26.5px;color:#222;left:965px;">Publish</div>
<div class="r" style="left:843.5px;top:722.7px;width:1.2px;height:22.6px;background:#cdc8c5"></div>
<div class="r" style="left:949.3px;top:722.7px;width:1.2px;height:22.6px;background:#cdc8c5"></div>
<div class="r" style="left:169.8px;top:772.3px;width:1142.4px;height:1.3px;background:#d5d0cd"></div>
<div class="r" style="left:190.6px;top:792.5px;width:27px;height:27px;background:#fff;border:1px solid #c4c0bd;border-radius:5px;box-shadow:0 0.5px 1px rgba(0,0,0,.12)"></div>
<svg class="r" style="left:193px;top:796px;" width="22" height="20" viewBox="0 0 22 20"><path d="M2.5 10.5L8 16.5L19.5 2.5" fill="none" stroke="#222" stroke-width="3.6" stroke-linejoin="round"/></svg>
<div class="t" style="top:792.46px;font-size:27.1px;line-height:27.1px;color:#222;left:231.1px;">Show weak conflicts</div>
<div class="r" style="left:169.8px;top:837.7px;width:1142.4px;height:1.3px;background:#9a9693"></div>
<div class="r" style="left:169.8px;top:880.6px;width:1142.4px;height:1.3px;background:#9a9693"></div>
<div class="r" style="left:170.8px;top:881.9px;width:1140.4px;height:314.1px;background:#fff;border-radius:0 0 19px 19px"></div>
<div class="r" style="left:268.9px;top:838.5px;width:1.2px;height:42.5px;background:#b3afac"></div>
<div class="r" style="left:540.5px;top:838.5px;width:1.2px;height:42.5px;background:#b3afac"></div>
<div class="t" style="top:847.39px;font-size:26px;line-height:26px;color:#111;left:215.2px;">#</div>
<svg class="r" style="left:234px;top:853px;" width="23" height="17.5" viewBox="0 0 23 17.5"><path d="M11.5 0.5L22 16.8H1Z" fill="#111"/></svg>
<div class="t" style="top:847.22px;font-size:26.2px;line-height:26.2px;color:#111;left:282px;">Source</div>
<div class="t" style="top:846.38px;font-size:27.2px;line-height:27.2px;color:#111;left:552.8px;">Description</div>
<div class="t" style="top:890.97px;font-size:26.5px;line-height:26.5px;color:#111;right:1819px;text-align:right;">3</div>
<svg class="r" style="left:288px;top:891px;" width="10" height="25" viewBox="0 0 10 25"><path d="M2.2 3.2Q2 1.2 4.7 1.2Q7.4 1.2 7.2 3.2L6 16.8H3.4Z" fill="#f2a733"/><circle cx="4.7" cy="20.6" r="2.2" fill="#f2a733"/></svg>
<div class="t" style="top:890.04px;font-size:27.6px;line-height:27.6px;color:#111;left:316.8px;">New Activity</div>
<div class="t" style="top:890.54px;font-size:27px;line-height:27px;color:#111;left:552.8px;">Expected work exceeds given value.</div></body></html>
